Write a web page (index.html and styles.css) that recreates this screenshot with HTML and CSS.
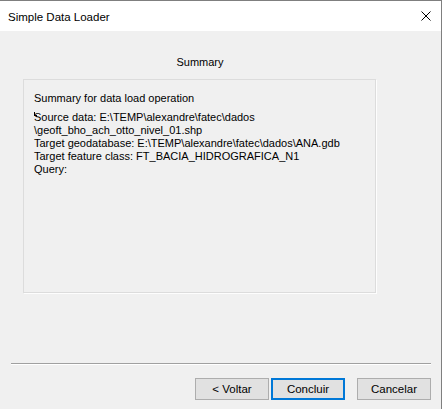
FILE: index.html
```html
<!DOCTYPE html>
<html>
<head>
<meta charset="utf-8">
<link rel="stylesheet" href="styles.css">
</head>
<body>
<div class="window">
  <div class="titlebar">
    <span class="title">Simple Data Loader</span>
    <svg class="close" width="10" height="10" viewBox="0 0 10 10"><path d="M0.5 0.5 L9.5 9.5 M9.5 0.5 L0.5 9.5" stroke="#000" stroke-width="1" fill="none"/></svg>
  </div>
  <div class="content">
    <div class="heading">Summary</div>
    <div class="group">
      <div class="caption">Summary for data load operation</div>
      <div class="textbox">
        <span class="caret"></span>
        <div>Source data: E:\TEMP\alexandre\fatec\dados</div>
        <div>\geoft_bho_ach_otto_nivel_01.shp</div>
        <div>Target geodatabase: E:\TEMP\alexandre\fatec\dados\ANA.gdb</div>
        <div>Target feature class: FT_BACIA_HIDROGRAFICA_N1</div>
        <div>Query:</div>
      </div>
    </div>
    <div class="separator"></div>
    <div class="buttons">
      <button class="btn">&lt; Voltar</button>
      <button class="btn default">Concluir</button>
      <button class="btn cancel">Cancelar</button>
    </div>
  </div>
</div>
</body>
</html>
```
FILE: styles.css
```css
html, body {
  margin: 0;
  padding: 0;
  width: 442px;
  height: 409px;
  overflow: hidden;
  background: #f0f0f0;
}
.window {
  box-sizing: border-box;
  width: 442px;
  height: 409px;
  border-top: 1px solid #7f7f7f;
  border-right: 1px solid #7f7f7f;
  display: flex;
  flex-direction: column;
  font-family: "Liberation Sans", Arial, sans-serif;
  font-size: 11px;
  color: #000;
}
.titlebar {
  height: 30px;
  background: #fff;
  display: flex;
  align-items: center;
  justify-content: space-between;
  padding: 0 10px 0 8px;
  flex-shrink: 0;
}
.title {
  font-size: 11.5px;
  line-height: 16px;
  padding-top: 1px;
}
.close {
  display: block;
  margin-top: -1px;
}
.content {
  flex: 1;
  background: #f0f0f0;
  display: flex;
  flex-direction: column;
}
.heading {
  text-align: center;
  width: 400px;
  margin-top: 24px;
  line-height: 14px;
  height: 14px;
}
.group {
  box-sizing: border-box;
  margin: 10px 0 0 23px;
  width: 353px;
  height: 214px;
  border: 1px solid #dcdcdc;
  box-shadow: 1px 1px 0 #fdfdfd;
  padding: 11px 0 0 10px;
}
.caption {
  line-height: 14px;
  height: 14px;
}
.textbox {
  position: relative;
  margin-top: 6px;
  line-height: 13px;
}
.caret {
  position: absolute;
  left: 0;
  top: 1px;
  width: 1px;
  height: 4px;
  background: #000;
}
.caret::after {
  content: "";
  position: absolute;
  left: 0;
  bottom: 0;
  width: 3px;
  height: 1px;
  background: #000;
}
.separator {
  margin: 70px 10px 0 11px;
  height: 1px;
  background: #a0a0a0;
  border-bottom: 1px solid #fff;
}
.buttons {
  display: flex;
  justify-content: flex-end;
  margin: 13px 10px 0 0;
}
.btn {
  box-sizing: border-box;
  width: 74px;
  height: 22px;
  background: #e1e1e1;
  border: 1px solid #adadad;
  font-family: "Liberation Sans", Arial, sans-serif;
  font-size: 11.5px;
  color: #000;
  padding: 0;
  margin: 0 0 0 2px;
}
.btn.default {
  border: 2px solid #0078d7;
}
.btn.cancel {
  margin-left: 12px;
}
```
